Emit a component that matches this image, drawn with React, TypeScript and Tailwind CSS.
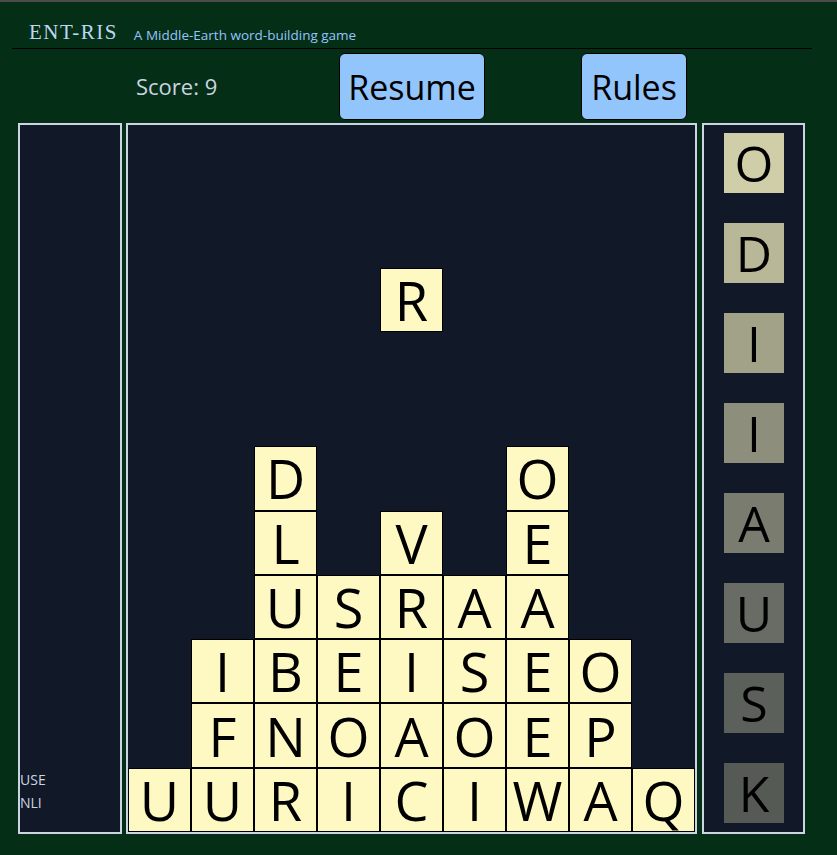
const board: string[] = [
  "         ",
  "         ",
  "         ",
  "         ",
  "         ",
  "  D   O  ",
  "  L V E  ",
  "  USRAA  ",
  " IBEISEO ",
  " FNOAOEP ",
  "UURICIWAQ",
];

const upcoming = [
  { letter: "O", bg: "bg-[#d0cea8]" },
  { letter: "D", bg: "bg-[#b8b797]" },
  { letter: "I", bg: "bg-[#a2a288]" },
  { letter: "I", bg: "bg-[#8d8e7b]" },
  { letter: "A", bg: "bg-[#7a7c70]" },
  { letter: "U", bg: "bg-[#686c65]" },
  { letter: "S", bg: "bg-[#5c605b]" },
  { letter: "K", bg: "bg-[#555a55]" },
];

const sans = "font-['Open_Sans',sans-serif]";

export default function App() {
  return (
    <div className={`min-h-[855px] bg-[#052e16] border-t-2 border-[#4b4b4b] ${sans}`}>
      <header className="ml-3 w-[800px] h-[47px] border-b border-black flex items-end pb-[5px] pl-[17px] gap-[16px]">
        <h1 className="font-['Liberation_Serif',serif] text-[21px] leading-none tracking-[0.07em] text-[#bcd7f0]">
          ENT-RIS
        </h1>
        <span className="text-[13.5px] leading-none text-[#93c5fd] pb-[1px]">
          A Middle-Earth word-building game
        </span>
      </header>

      <div className="flex items-start h-[74px] pt-[4px]">
        <div className="ml-[136px] w-[203px] h-[67px] flex items-center text-[22px] text-[#cbd5e1]">
          Score: 9
        </div>
        <button className="w-[146px] h-[67px] rounded-md border border-black bg-[#93c5fd] text-[34px] leading-none text-black">
          Resume
        </button>
        <button className="ml-[96px] w-[106px] h-[67px] rounded-md border border-black bg-[#93c5fd] text-[34px] leading-none text-black">
          Rules
        </button>
      </div>

      <div className="flex ml-[18px] h-[711px]">
        <div className="w-[104px] h-full border-2 border-[#cbd5e1] bg-[#111827] flex flex-col justify-end pb-[18px] text-[14px] leading-[23px] text-[#cbd5e1]">
          <span>USE</span>
          <span>NLI</span>
        </div>

        <div className="relative ml-[4px] w-[571px] h-full border-2 border-[#cbd5e1] bg-[#111827] grid grid-cols-[repeat(9,63px)] grid-rows-[repeat(11,minmax(0,1fr))]">
          {board.flatMap((row, r) =>
            row.split("").map((ch, c) =>
              ch === " " ? (
                <div key={`${r}-${c}`} />
              ) : (
                <div
                  key={`${r}-${c}`}
                  className="border border-black bg-[#fef9c3] flex items-center justify-center text-[54px] leading-none text-black"
                >
                  {ch}
                </div>
              )
            )
          )}
          <div className="absolute left-[252px] top-[143px] w-[63px] h-[64px] border border-black bg-[#fef9c3] flex items-center justify-center text-[54px] leading-none text-black">
            R
          </div>
        </div>

        <div className="ml-[5px] w-[103px] h-full border-2 border-[#cbd5e1] bg-[#111827] flex flex-col items-center pt-[8px] pl-[1px] gap-[30px]">
          {upcoming.map((t, i) => (
            <div
              key={i}
              className={`w-[60px] h-[60px] ${t.bg} flex items-center justify-center text-[50px] leading-none text-black`}
            >
              {t.letter}
            </div>
          ))}
        </div>
      </div>
    </div>
  );
}
